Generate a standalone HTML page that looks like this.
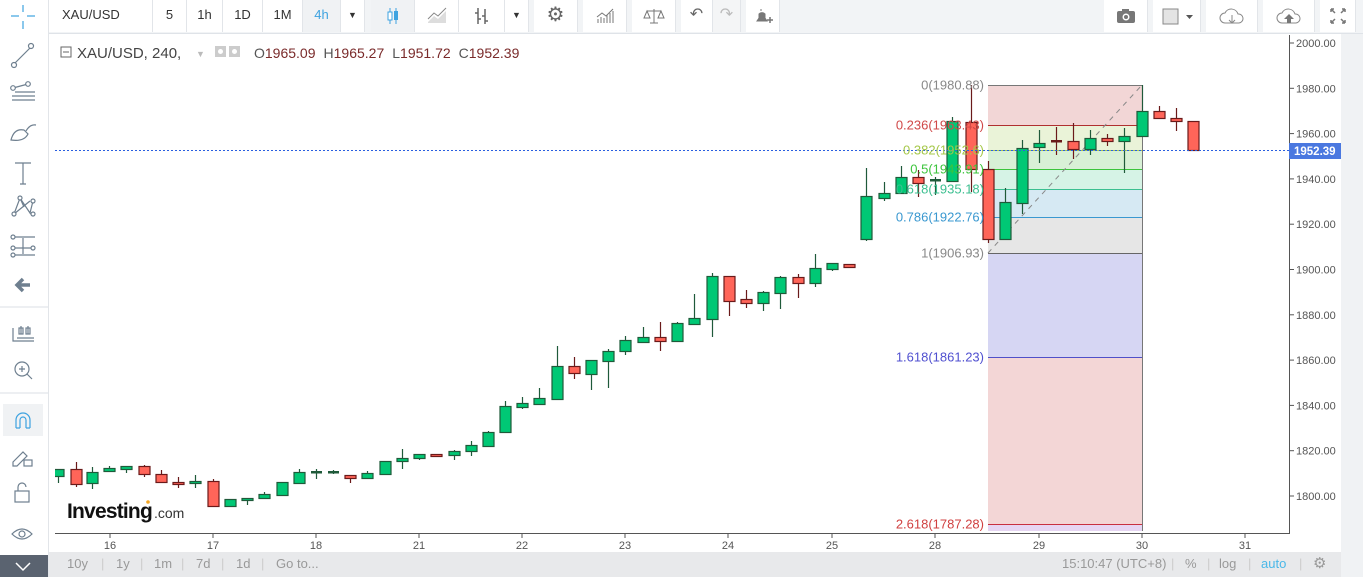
<!DOCTYPE html>
<html><head><meta charset="utf-8"><style>
*{margin:0;padding:0;box-sizing:border-box}
body{width:1363px;height:577px;overflow:hidden;background:#fff;font-family:"Liberation Sans",sans-serif;position:relative}
.abs{position:absolute}
#top{left:49px;top:0;width:1314px;height:34px;background:#f2f4f6;border-bottom:1px solid #dfe3e8}
.btn{position:absolute;top:0;height:32px;background:#fff;border-right:1px solid #e2e5e9;font-size:13px;color:#333;text-align:center;line-height:30px}
#left{left:0;top:0;width:49px;height:577px;background:#fff;border-right:1px solid #e2e5e9}
#rs{left:1341px;top:34px;width:22px;height:543px;background:#f0f2f4}
#bot{left:49px;top:552px;width:1292px;height:25px;background:#e8e9eb;font-size:13px;color:#999;line-height:24px}
</style></head><body>
<div id="left" class="abs">
<svg width="49" height="577" fill="none" stroke="#6e7f8f" stroke-width="1.2">
<g stroke="#3ea3e0"><line x1="11" y1="16" x2="19" y2="16"/><line x1="27" y1="16" x2="35" y2="16"/><line x1="23" y1="5" x2="23" y2="12"/><line x1="23" y1="21" x2="23" y2="29"/></g>
<line x1="14" y1="64" x2="31" y2="47"/><circle cx="14" cy="65" r="2.5" fill="#fff"/><circle cx="31" cy="46" r="2.5" fill="#fff"/>
<line x1="13" y1="88" x2="28" y2="84"/><circle cx="13" cy="88" r="2.3" fill="#fff"/><circle cx="28" cy="84" r="2.3" fill="#fff"/><line x1="12" y1="96" x2="35" y2="96"/><line x1="12" y1="100" x2="35" y2="100"/><line x1="15" y1="92" x2="35" y2="92"/>
<path d="M11 140 Q14 128 24 130 L28 134 Q24 142 11 140Z M26 131 Q30 124 36 125"/>
<path d="M15 163h16M23 163v21M20 184h6"/>
<path d="M14 214 L20 198 L30 213 L33 201 M20 198 L24 207 M14 214 L30 201"/><circle cx="14" cy="214" r="2" fill="#fff"/><circle cx="20" cy="198" r="2" fill="#fff"/><circle cx="33" cy="201" r="2" fill="#fff"/><circle cx="33" cy="214" r="2" fill="#fff"/>
<path d="M15 237h20M15 248h20M15 255h20M23 238v16"/><circle cx="13" cy="237" r="2" fill="#fff"/><circle cx="13" cy="248" r="2" fill="#fff"/><circle cx="13" cy="255" r="2" fill="#fff"/><circle cx="33" cy="248" r="2" fill="#fff"/>
<path d="M30 285H17M23 279l-6 6 6 6" stroke-width="3.5"/>
<line x1="0" y1="307" x2="48" y2="307" stroke="#e2e5e9"/>
<path d="M13 328v13h21M17 338h17M21 326v8M28 326v8"/><rect x="19" y="328" width="4" height="6"/><rect x="26" y="328" width="4" height="6"/>
<circle cx="22" cy="369" r="7"/><path d="M27 374l5 5M22 366v6M19 369h6"/>
<line x1="0" y1="393" x2="48" y2="393" stroke="#e2e5e9"/>
<rect x="3" y="404" width="40" height="32" fill="#f0f2f4" stroke="none"/>
<path d="M16 428v-8a7 7 0 0 1 14 0v8M16 428h4M26 428h4M20 428v-8a3 3 0 0 1 6 0v8" stroke="#3ea3e0"/>
<path d="M13 462l10-10 4 4-10 10h-4z"/><rect x="24" y="460" width="8" height="6"/>
<rect x="15" y="491" width="14" height="11"/><path d="M18 491v-4a4 4 0 0 1 8 0"/>
<path d="M12 534q10-10 20 0q-10 10-20 0z"/><circle cx="22" cy="534" r="3"/>
<rect x="0" y="555" width="48" height="22" fill="#5a6370" stroke="none"/>
<path d="M16 563l7 7 7-7" stroke="#fff" stroke-width="1.5"/>
</svg></div>
<div id="top" class="abs">
<div class="btn" style="left:0;width:104px;text-align:left;padding-left:13px">XAU/USD</div>
<div class="btn" style="left:104px;width:34px">5</div>
<div class="btn" style="left:138px;width:36px">1h</div>
<div class="btn" style="left:174px;width:40px">1D</div>
<div class="btn" style="left:214px;width:40px">1M</div>
<div class="btn" style="left:254px;width:38px;color:#3ea3e0;background:#f0f2f4">4h</div>
<div class="btn" style="left:292px;width:24px;font-size:9px">▼</div>
<div class="btn" style="left:322px;width:44px;background:#f0f2f4"><svg width="20" height="20" style="margin-top:6px"><path d="M7 2v16M13 2v16" stroke="#3ea3e0"/><rect x="5" y="6" width="4" height="8" fill="#fff" stroke="#3ea3e0"/><rect x="11" y="5" width="4" height="9" fill="#3ea3e0"/></svg></div>
<div class="btn" style="left:366px;width:44px"><svg width="22" height="20" style="margin-top:6px"><path d="M2 16l6-6 4 3 8-8v12H2z" fill="#ddd"/><path d="M2 13l6-6 4 3 8-8" stroke="#888" fill="none"/></svg></div>
<div class="btn" style="left:410px;width:46px"><svg width="20" height="20" style="margin-top:6px" stroke="#666" fill="none" stroke-width="1.5"><path d="M6 2v16M3 7h3M6 13h3M13 3v15M10 10h3M13 15h3"/></svg></div>
<div class="btn" style="left:456px;width:24px;font-size:9px">▼</div>
<div class="btn" style="left:485px;width:44px;font-size:20px;color:#666">⚙</div>
<div class="btn" style="left:534px;width:44px"><svg width="22" height="20" style="margin-top:6px" stroke="#777"><path d="M4 17v-4M7 17v-6M10 17v-5M13 17v-8M16 17v-10M19 17v-12"/><path d="M3 11l5-4 4 3 7-7" fill="none"/></svg></div>
<div class="btn" style="left:583px;width:44px"><svg width="22" height="20" style="margin-top:6px" stroke="#777" fill="none"><path d="M11 3v14M4 5h14M7 17h8M4 5l-3 7h6zM18 5l-3 7h6z"/></svg></div>
<div class="btn" style="left:632px;width:32px;color:#666;font-size:16px">↶</div>
<div class="btn" style="left:664px;width:28px;color:#bbb;font-size:16px;background:#f4f5f6">↷</div>
<div class="btn" style="left:697px;width:34px"><svg width="20" height="20" style="margin-top:6px"><path d="M4 15h10l-2-3V8a4 4 0 0 0-6 0v4z M8 3v2" fill="#777" stroke="#777"/><path d="M14 14h6M17 11v6" stroke="#777" stroke-width="1.5"/></svg></div>
<div class="btn" style="left:1055px;width:44px"><svg width="22" height="20" style="margin-top:6px"><rect x="2" y="5" width="18" height="12" rx="2" fill="#777"/><rect x="7" y="3" width="7" height="3" fill="#777"/><circle cx="11" cy="11" r="3.5" fill="#fff"/><circle cx="11" cy="11" r="2" fill="#777"/></svg></div>
<div class="btn" style="left:1104px;width:48px"><svg width="40" height="20" style="margin-top:6px"><rect x="6" y="3" width="15" height="15" fill="#e4e4e4" stroke="#888"/><path d="M29 9h7l-3.5 4z" fill="#555"/></svg></div>
<div class="btn" style="left:1157px;width:52px"><svg width="30" height="22" style="margin-top:5px" fill="none" stroke="#888"><path d="M8 18a5 5 0 0 1 0-10a7 7 0 0 1 13 1a4.5 4.5 0 0 1 1 9z"/><path d="M15 10v8M12 15l3 3 3-3"/></svg></div>
<div class="btn" style="left:1214px;width:52px"><svg width="30" height="22" style="margin-top:5px"><path d="M8 18a5 5 0 0 1 0-10a7 7 0 0 1 13 1a4.5 4.5 0 0 1 1 9z" fill="none" stroke="#888"/><path d="M15 9l-5 5h3v4h4v-4h3z" fill="#777"/></svg></div>
<div class="btn" style="left:1271px;width:36px"><svg width="20" height="20" style="margin-top:6px" stroke="#777" stroke-width="1.5"><path d="M3 3l4 4M3 3h3M3 3v3M17 3l-4 4M17 3h-3M17 3v3M3 17l4-4M3 17h3M3 17v-3M17 17l-4-4M17 17h-3M17 17v-3"/></svg></div>
</div>
<div id="rs" class="abs"></div>
<svg class="abs" style="left:0;top:0" width="1341" height="552" font-family="Liberation Sans, sans-serif" id="ch">
<g font-size="12.5" fill="#555">
<rect x="61" y="47" width="10" height="10" fill="none" stroke="#666"/><line x1="63" y1="52" x2="69" y2="52" stroke="#666"/>
<text x="77" y="58" font-size="15" fill="#444">XAU/USD, 240,</text><text x="196" y="57" font-size="9" fill="#bbb">▼</text>
<rect x="215" y="46" width="11" height="11" fill="#ccc"/><rect x="229" y="46" width="11" height="11" fill="#ccc"/>
<circle cx="220.5" cy="51.5" r="2.5" fill="#fff"/><circle cx="234.5" cy="51.5" r="2.5" fill="#fff"/>
<text x="254" y="58" font-size="14"><tspan fill="#555">O</tspan><tspan fill="#7a2a2a">1965.09</tspan><tspan fill="#555" dx="8">H</tspan><tspan fill="#7a2a2a">1965.27</tspan><tspan fill="#555" dx="8">L</tspan><tspan fill="#7a2a2a">1951.72</tspan><tspan fill="#555" dx="8">C</tspan><tspan fill="#7a2a2a">1952.39</tspan></text>
</g>
<g id="fib"></g>
<g id="cnd"></g>
<line x1="55" y1="150.5" x2="1289" y2="150.5" stroke="#2a5fe0" stroke-dasharray="2,2"/>
<line x1="1289.5" y1="35" x2="1289.5" y2="534" stroke="#555"/>
<line x1="55" y1="533.5" x2="1290" y2="533.5" stroke="#555"/>
<g id="ax" font-size="11" fill="#555"></g>
<rect x="1289" y="143" width="52" height="16" fill="#4a78e0"/><text x="1294" y="155" font-size="11.5" fill="#fff" font-weight="bold">1952.39</text>
<text x="67" y="518" font-size="21" font-weight="bold" fill="#111" letter-spacing="-0.8">Investing</text><text x="154" y="518" font-size="14" fill="#333">.com</text><circle cx="148" cy="502" r="1.8" fill="#f5a623"/>
</svg>
<div id="bot" class="abs">
<span style="position:absolute;left:18px">10y</span><span style="position:absolute;left:52px;color:#ccc">|</span>
<span style="position:absolute;left:67px">1y</span><span style="position:absolute;left:91px;color:#ccc">|</span>
<span style="position:absolute;left:105px">1m</span><span style="position:absolute;left:132px;color:#ccc">|</span>
<span style="position:absolute;left:147px">7d</span><span style="position:absolute;left:172px;color:#ccc">|</span>
<span style="position:absolute;left:187px">1d</span><span style="position:absolute;left:212px;color:#ccc">|</span>
<span style="position:absolute;left:227px">Go to...</span>
<span style="position:absolute;left:1013px">15:10:47 (UTC+8)</span><span style="position:absolute;left:1122px;color:#ccc">|</span>
<span style="position:absolute;left:1136px">%</span><span style="position:absolute;left:1158px;color:#ccc">|</span>
<span style="position:absolute;left:1170px">log</span><span style="position:absolute;left:1199px;color:#ccc">|</span>
<span style="position:absolute;left:1212px;color:#4ab8e8">auto</span><span style="position:absolute;left:1250px;color:#ccc">|</span>
<span style="position:absolute;left:1264px;font-size:15px">⚙</span>
</div>
<script>
var NS='http://www.w3.org/2000/svg';
function el(p,t,a,txt){var e=document.createElementNS(NS,t);for(var k in a)e.setAttribute(k,a[k]);if(txt)e.textContent=txt;p.appendChild(e);return e;}
var fib=document.getElementById('fib');
var bands=[[85,125,'#f2d6d6'],[125,150,'#eaf3d8'],[150,169,'#d8f0d6'],[169,189,'#d6f3e6'],[189,217,'#d6e9f3'],[217,253,'#e6e6e6'],[253,357,'#d6d6f3'],[357,524,'#f3d6d6'],[524,531,'#e6d6f3']];
bands.forEach(function(b){el(fib,'rect',{x:988,y:b[0],width:154,height:b[1]-b[0],fill:b[2]});});
var lv=[[85,'#777','#888','0(1980.88)'],[125,'#b03030','#d04848','0.236(1963.43)'],[150,'#a6c84a','#a6c84a','0.382(1952.6)'],[169,'#3cc43c','#3cc43c','0.5(1943.91)'],[189,'#3cbf90','#3cbf90','0.618(1935.18)'],[217,'#3a98d0','#3a98d0','0.786(1922.76)'],[253,'#666','#888','1(1906.93)'],[357,'#5050c8','#5050d0','1.618(1861.23)'],[524,'#c83040','#d04040','2.618(1787.28)']];
lv.forEach(function(l){el(fib,'line',{x1:988,x2:1142,y1:l[0]+.5,y2:l[0]+.5,stroke:l[1]});});
el(fib,'line',{x1:1142.5,x2:1142.5,y1:85,y2:531,stroke:'#777'});
el(fib,'line',{x1:988,y1:253,x2:1142,y2:85,stroke:'#888','stroke-dasharray':'5,5'});
var C=[[58,469,476,469,483,1],[76,469,484,462,487,0],[92,472,483,467,489,1],[109,468,471,466,471,1],[126,466,469,466,473,1],[144,466,474,465,477,0],[161,474,482,470,482,0],[178,482,484,477,488,2],[195,481,483,475,488,1],[213,481,506,479,506,0],[230,499,506,499,506,1],[247,498,500,498,505,1],[264,494,498,492,498,1],[282,482,495,482,495,1],[299,472,483,469,483,1],[316,472,472,469,479,3],[333,472,472,470,474,3],[350,475,478,475,483,0],[367,473,478,471,478,1],[385,461,474,461,474,1],[402,458,461,449,469,1],[419,454,458,454,460,1],[436,454,456,454,456,2],[454,451,455,450,460,1],[471,445,451,441,456,1],[488,432,446,431,447,1],
[505,406,432,401,432,1],[522,403,407,397,409,1],[539,398,404,388,404,1],[557,366,399,346,399,1],[574,366,373,357,379,0],[591,360,374,360,390,1],[608,351,361,349,388,1],[625,340,351,336,355,1],[643,337,342,327,342,1],[660,337,341,322,351,0],[677,323,341,322,341,1],[694,318,324,294,324,1],[712,276,319,273,337,1],[729,276,301,276,316,0],[746,299,303,290,308,0],[763,292,303,291,311,1],[780,277,293,276,309,1],[798,277,283,274,298,0],[815,268,283,254,287,1],[832,263,269,263,271,1],[849,264,267,264,267,0],
[866,196,239,168,241,1],[884,193,198,182,201,1],[901,177,193,166,193,1],[918,177,183,170,197,0],[935,180,180,177,195,3],[952,121,181,117,182,1],[971,122,169,85,192,0],[988,169,239,161,243,0],[1005,202,239,188,239,1],[1022,148,203,140,214,1],[1039,143,147,130,163,1],[1056,141,141,127,155,2],[1073,141,149,123,159,0],[1090,138,149,130,155,1],[1107,138,141,134,146,0],[1124,136,141,128,173,1],[1142,111,136,85,136,1],[1159,111,118,106,118,0],[1176,118,121,108,131,0],[1193,121,150,121,151,0]];
var g=document.getElementById('cnd');
C.forEach(function(c){var x=c[0],t=c[1],b=c[2],up=c[5]==1||c[5]==3;
var st=up?'#1f5a3a':'#6a1a1a',fl=up?'#00c875':'#ff6559';
el(g,'line',{x1:x+.5,x2:x+.5,y1:c[3],y2:c[4],stroke:st,'stroke-width':1.2});
if(b-t<2){el(g,'rect',{x:x-5,y:t-1,width:11,height:2.5,fill:st});}
else el(g,'rect',{x:x-5,y:t+.5,width:11,height:b-t,fill:fl,stroke:st,'stroke-width':1.2});});
el(g,'rect',{x:49,y:35,width:6,height:500,fill:'#fff'});
var ax=document.getElementById('ax');
for(var i=0;i<=10;i++){var p=2000-i*20,y=43+i*45.3;el(ax,'line',{x1:1289,x2:1294,y1:y,y2:y,stroke:'#555'});el(ax,'text',{x:1296,y:y+4},p.toFixed(2));}
var d=[['16',110],['17',213],['18',316],['21',419],['22',522],['23',625],['24',728],['25',832],['28',935],['29',1039],['30',1142],['31',1245]];
d.forEach(function(q){el(ax,'line',{x1:q[1],x2:q[1],y1:533,y2:538,stroke:'#555'});el(ax,'text',{x:q[1],y:549,'text-anchor':'middle'},q[0]);});
lv.forEach(function(l){el(ax,'text',{x:984,y:l[0]+4.5,'text-anchor':'end',fill:l[2],'font-size':13},l[3]);});
</script>
</body></html>
